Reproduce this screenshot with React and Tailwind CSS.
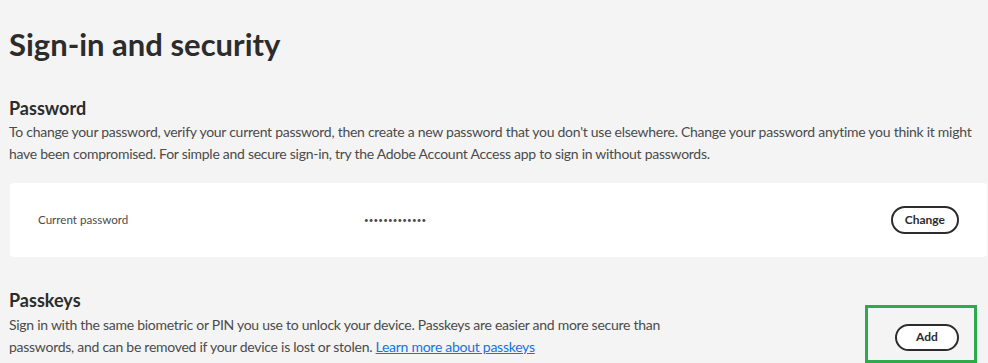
import React from "react";

export default function App() {
  return (
    <div
      className="w-[988px] h-[363px] overflow-hidden bg-[#f4f4f4] text-[#4b4b4b] pl-[9px] pr-[1px]"
      style={{ fontFamily: "Lato, 'Open Sans', sans-serif" }}
    >
      <h1 className="pt-[24px] text-[31px] leading-[40px] font-bold text-[#2c2c2c]">
        Sign-in and security
      </h1>

      <section className="mt-[32px]">
        <h2 className="text-[18px] leading-[24px] font-bold text-[#2c2c2c]">Password</h2>
        <p className="mt-[1px] text-[14px] leading-[22px] tracking-[-0.27px]">
          To change your password, verify your current password, then create a new password that you don't use elsewhere. Change your password anytime you think it might have been compromised. For simple and secure sign-in, try the Adobe Account Access app to sign in without passwords.
        </p>
        <div className="mt-[18px] ml-[1px] h-[74px] rounded-[4px] bg-white flex items-center pl-[28px] pr-[28px]">
          <span className="w-[326px] text-[11.6px] text-[#4b4b4b]">Current password</span>
          <span className="text-[8px] tracking-[0.15px] text-[#4b4b4b]">•••••••••••••</span>
          <button className="ml-auto h-[28px] px-[12px] rounded-full border-2 border-[#2c2c2c] bg-white text-[12px] font-bold text-[#2c2c2c]">
            Change
          </button>
        </div>
      </section>

      <section className="mt-[31px] flex justify-between">
        <div className="w-[670px]">
          <h2 className="text-[18px] leading-[24px] font-bold text-[#2c2c2c]">Passkeys</h2>
          <p className="mt-[2px] text-[14px] leading-[22px] tracking-[-0.27px]">
            Sign in with the same biometric or PIN you use to unlock your device. Passkeys are easier and more secure than passwords, and can be removed if your device is lost or stolen.{" "}
            <a href="#" className="text-[#1473e6] underline">Learn more about passkeys</a>
          </p>
        </div>
        <div className="mt-[17px] mr-[10px] w-[112px] h-[58px] border-[3px] border-[#2daa4b] pl-[27px] pt-[15px]">
          <button className="w-[64px] h-[27px] rounded-full border-2 border-[#2c2c2c] bg-white text-[12px] font-bold text-[#2c2c2c]">
            Add
          </button>
        </div>
      </section>
    </div>
  );
}
